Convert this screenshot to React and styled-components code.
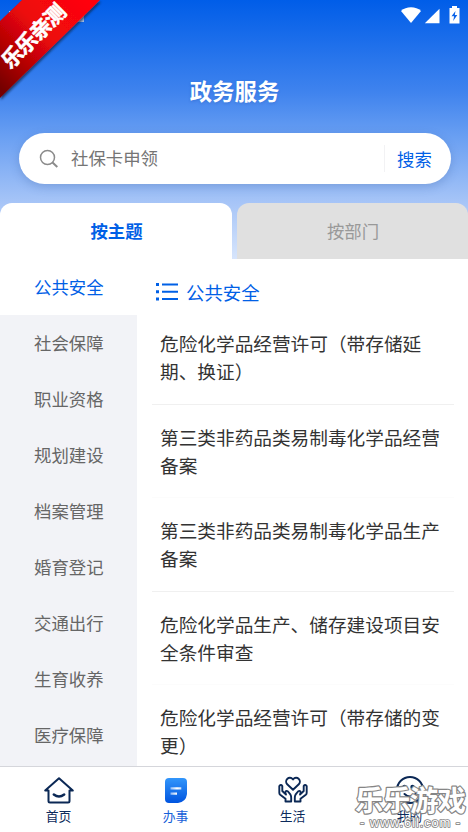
import React from 'react';
import styled, { createGlobalStyle } from 'styled-components';

const Global = createGlobalStyle`
  * { box-sizing: border-box; }
  body { margin: 0; background: #fff; font-family: "Noto Sans CJK SC", "Noto Sans", sans-serif; }
`;
const Screen = styled.div`
  position: relative;
  width: 468px;
  height: 832px;
  overflow: hidden;
  display: flex;
  flex-direction: column;
  background: #fff;
`;
const Header = styled.header`
  height: 259px;
  flex: none;
  display: flex;
  flex-direction: column;
  background: linear-gradient(180deg, #005de8 0, #3f83ee 92px, #669df2 133px, #a7c5f7 203px, #d7e5fc 259px);
`;
const StatusBar = styled.div`
  height: 32px;
  display: flex;
  justify-content: flex-end;
`;
const Title = styled.h1`
  margin: 30px 0 0;
  height: 56px;
  line-height: 56px;
  text-align: center;
  color: #fff;
  font-size: 22.4px;
  font-weight: 700;
  padding-left: 1px;
  text-shadow: 0 1px 3px rgba(0, 40, 130, 0.2);
`;
const SearchBox = styled.div`
  margin: 15px 17px 0 19px;
  height: 51px;
  flex: none;
  border-radius: 26px;
  background: #fff;
  display: flex;
  align-items: center;
  padding-left: 20px;
  box-shadow: 0 3px 10px rgba(40, 80, 150, 0.25);
`;
const Placeholder = styled.span`
  flex: 1;
  margin-left: 12px;
  padding-bottom: 2px;
  font-size: 17.4px;
  line-height: 48px;
  color: #757575;
`;
const SearchButton = styled.button`
  width: 67px;
  height: 27px;
  padding: 0 7px 0 0;
  border: 0;
  border-left: 1px solid #f2f2f4;
  background: none;
  color: #0060e6;
  font: 17.4px/27px "Noto Sans CJK SC", sans-serif;
`;
const Tabs = styled.div`
  margin-top: 19px;
  height: 56px;
  display: flex;
  gap: 5px;
`;
const Tab = styled.div`
  width: ${(p) => (p.$active ? 232 : 231)}px;
  padding-left: 1px;
  border-radius: 12px 12px 0 0;
  background: ${(p) => (p.$active ? '#fff' : '#e0e0e0')};
  color: ${(p) => (p.$active ? '#0060e6' : '#999')};
  font-weight: ${(p) => (p.$active ? 700 : 400)};
  font-size: 17.4px;
  line-height: 56px;
  text-align: center;
`;
const Body = styled.main`
  flex: 1;
  min-height: 0;
  display: flex;
  overflow: hidden;
`;
const Sidebar = styled.nav`
  width: 137px;
  flex: none;
  background: #f2f3f7;
`;
const Category = styled.div`
  height: 56px;
  line-height: 56px;
  padding-left: 34px;
  font-size: 17.4px;
  color: ${(p) => (p.$active ? '#0060e6' : '#666')};
  background: ${(p) => (p.$active ? '#fff' : '#f2f3f7')};
`;
const Content = styled.section`
  flex: 1;
  padding: 0 14px 0 15px;
`;
const ContentHead = styled.div`
  height: 52px;
  padding: 13px 0 0 4px;
  display: flex;
  align-items: center;
  gap: 8px;
  color: #0060e6;
  font-size: 18.4px;
`;
const Service = styled.div`
  height: 93.5px;
  padding: 18.2px 0 0 8px;
  border-bottom: 1px solid ${(p) => (p.$line ? '#f0f0f0' : '#fcfcfc')};
  color: #333;
  font-size: 18.67px;
  line-height: 28px;
  white-space: nowrap;
`;
const BottomBar = styled.footer`
  height: 66px;
  flex: none;
  display: grid;
  grid-template-columns: repeat(4, 1fr);
  border-top: 1px solid #d5d6db;
`;
const NavItem = styled.div`
  display: flex;
  flex-direction: column;
  align-items: center;
  padding-top: 7px;
  color: ${(p) => (p.$active ? '#1560d8' : '#0b2a5b')};
  font-size: 12.8px;
  line-height: 18px;
  svg { display: block; margin-bottom: 1px; }
`;
const Ribbon = styled.div`
  position: absolute;
  left: 0;
  top: 0;
  width: 104px;
  height: 104px;
  svg { display: block; }
`;
const Watermark = styled.div`
  position: absolute;
  left: 354px;
  top: 778px;
`;

const StatusIcons = () => (
  <svg width="70" height="32" viewBox="0 0 70 32" fill="#fff">
    <path d="M3 11C8 6 18 6 23 11L13 23Z" />
    <path d="M41.5 8.7V23.3H26.8Z" />
    <path fillRule="evenodd" d="M54 6h5v2h2.5v15.5h-10V8H54ZM57.5 11l-4 5.2h2.6L55.2 21l4.1-6h-2.5Z" />
  </svg>
);
const SearchIcon = () => (
  <svg width="20" height="20" viewBox="0 0 20 20" fill="none" stroke="#8b8b8b">
    <circle cx="8.5" cy="8.5" r="7" strokeWidth="1.5" />
    <path d="M13.5 13.5L18.3 18" strokeWidth="2" />
  </svg>
);
const ListIcon = () => (
  <svg width="22" height="18" viewBox="0 0 22 18" fill="#0060e6">
    <path d="M0 0h3v3H0zM6 .4h16v2H6zM0 7.3h3v3H0zM6 7.7h16v2H6zM0 14.5h3v3H0zM6 15h16v2H6z" />
  </svg>
);
const HomeIcon = () => (
  <svg width="32" height="32" viewBox="0 0 32 32" fill="none" stroke="#0b2855" strokeWidth="2" strokeLinejoin="round" strokeLinecap="round">
    <path d="M2.2 16.5L16 4.2 29.8 16.5H26.5V27Q26.5 28.5 25 28.5H7Q5.5 28.5 5.5 27V16.5Z" />
    <path d="M10.8 20.5Q16 24.5 21.2 20.5" strokeWidth="2.5" />
  </svg>
);
const WorkIcon = () => (
  <svg width="32" height="32" viewBox="0 0 32 32">
    <defs>
      <linearGradient id="work" x1="0" y1="0" x2="0" y2="1"><stop stopColor="#3296fb" /><stop offset="1" stopColor="#0054df" /></linearGradient>
      <linearGradient id="line" x1="0" x2="1"><stop stopColor="#fff" stopOpacity=".5" /><stop offset=".6" stopColor="#fff" /><stop offset="1" stopColor="#fff" stopOpacity=".75" /></linearGradient>
    </defs>
    <path fill="url(#work)" d="M9 4H23Q27 4 27 8V20Q26 28 18 29H9Q5 29 5 25V8Q5 4 9 4Z" />
    <path fill="url(#line)" d="M10.5 13.3h10.8v2.2H10.5zM10.5 18.5h6.5v2.2h-6.5z" />
  </svg>
);
const LifeIcon = () => (
  <svg width="32" height="32" viewBox="0 0 32 32" fill="none" stroke="#0b2855" strokeWidth="1.9" strokeLinejoin="round" strokeLinecap="round">
    <path d="M16 15.8L10.2 10.3C6.8 6.5 12.2 1 16 5.5C19.8 1 25.2 6.5 21.8 10.3Z" />
    <path d="M8.5 27.5V24.8L3.2 20.8Q2.2 20 2.3 18.5V12Q4 10 5.3 12V17L9 20.5C7.5 17.5 9 16 11 17.5L13.5 20.7Q14.3 22 14.2 24V27.5Z" />
    <path d="M23.5 27.5V24.8L28.8 20.8Q29.8 20 29.7 18.5V12Q28 10 26.7 12V17L23 20.5C24.5 17.5 23 16 21 17.5L18.5 20.7Q17.7 22 17.8 24V27.5Z" />
  </svg>
);
const MineIcon = () => (
  <svg width="32" height="32" viewBox="0 0 32 32" fill="none" stroke="#0b2855" strokeWidth="2" strokeLinecap="round">
    <circle cx="16" cy="16" r="13" />
    <path d="M10.5 20Q16 25 21.5 20" />
    <circle cx="10.5" cy="13" r="1.2" fill="#0b2855" />
    <circle cx="18.5" cy="13" r="1.2" fill="#0b2855" />
  </svg>
);

const categories = ['公共安全', '社会保障', '职业资格', '规划建设', '档案管理', '婚育登记', '交通出行', '生育收养', '医疗保障'];
const services = [
  ['危险化学品经营许可（带存储延', '期、换证）', true],
  ['第三类非药品类易制毒化学品经营', '备案', false],
  ['第三类非药品类易制毒化学品生产', '备案', true],
  ['危险化学品生产、储存建设项目安', '全条件审查', false],
  ['危险化学品经营许可（带存储的变', '更）', false],
];

export default function App() {
  return (
    <Screen>
      <Global />
      <Header>
        <StatusBar><StatusIcons /></StatusBar>
        <Title>政务服务</Title>
        <SearchBox>
          <SearchIcon />
          <Placeholder>社保卡申领</Placeholder>
          <SearchButton>搜索</SearchButton>
        </SearchBox>
        <Tabs>
          <Tab $active>按主题</Tab>
          <Tab>按部门</Tab>
        </Tabs>
      </Header>
      <Body>
        <Sidebar>
          {categories.map((c, i) => <Category key={c} $active={i === 0}>{c}</Category>)}
        </Sidebar>
        <Content>
          <ContentHead><ListIcon />公共安全</ContentHead>
          {services.map(([a, b, line]) => <Service key={a} $line={line}>{a}<br />{b}</Service>)}
        </Content>
      </Body>
      <BottomBar>
        <NavItem><HomeIcon />首页</NavItem>
        <NavItem $active><WorkIcon />办事</NavItem>
        <NavItem><LifeIcon />生活</NavItem>
        <NavItem><MineIcon />我的</NavItem>
      </BottomBar>
      <Ribbon>
        <svg width="104" height="104" viewBox="0 0 104 104">
          <defs>
            <linearGradient id="red" gradientUnits="userSpaceOnUse" x1="85" y1="0" x2="0" y2="88">
              <stop stopColor="#ff0508" /><stop offset=".42" stopColor="#ed080b" /><stop offset=".7" stopColor="#b80305" /><stop offset="1" stopColor="#740000" />
            </linearGradient>
            <filter id="shade" x="-20%" y="-20%" width="140%" height="140%"><feDropShadow dx="1" dy="2" stdDeviation="1.2" floodColor="#102040" floodOpacity=".7" /></filter>
          </defs>
          <path d="M78 14h6v8h-8z" fill="#a9bfe5" />
          <path d="M9 11h3v2H9z" fill="#a9c8f8" />
          <path d="M22 0H100L0 98V21Z" fill="url(#red)" filter="url(#shade)" />
          <text transform="translate(10.5 70) rotate(-45)" fill="#fff" fontFamily="Noto Sans CJK SC" fontWeight="700" fontSize="21" letterSpacing="-1.1" stroke="#fff" strokeWidth=".6">乐乐亲测</text>
        </svg>
      </Ribbon>
      <Watermark>
        <svg width="114" height="54" viewBox="0 0 114 54" fill="#fff" stroke="#858585" paintOrder="stroke" strokeLinejoin="round">
          <text x="1" y="33" textLength="111" fontFamily="Noto Sans CJK SC" fontWeight="700" fontSize="28.5" strokeWidth="2.4">乐乐游戏</text>
          <text x="6" y="49" textLength="100" fontFamily="Liberation Sans" fontSize="13" strokeWidth="1.7">- www.6ll.com -</text>
        </svg>
      </Watermark>
    </Screen>
  );
}
